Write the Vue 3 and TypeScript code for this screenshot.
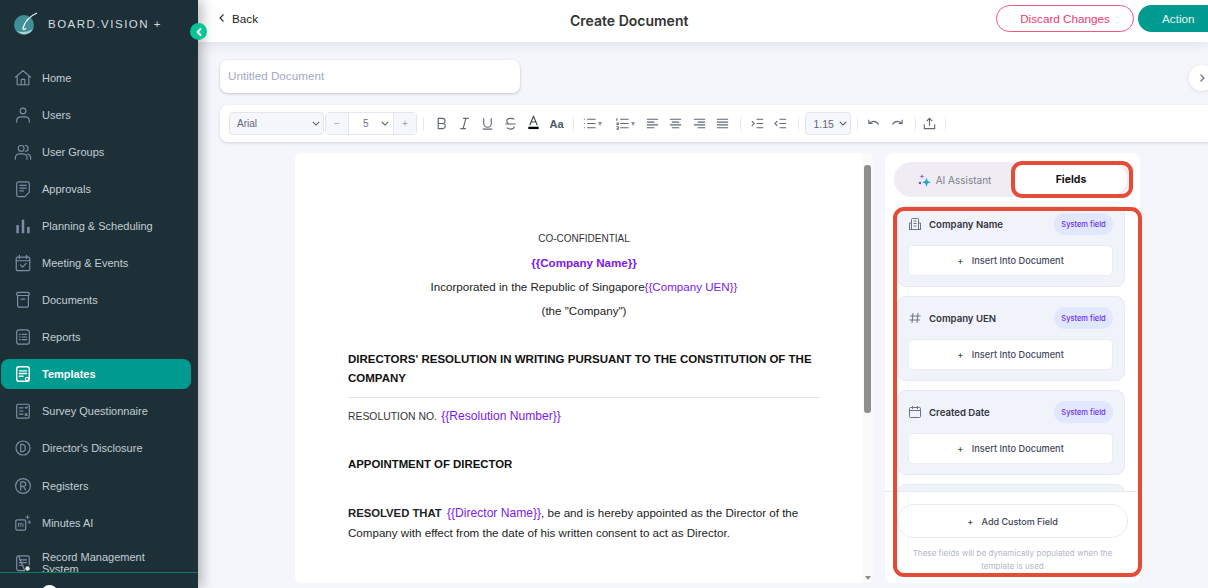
<script setup lang="ts">
const navItems = [
  { label: 'Home', icon: 'home' },
  { label: 'Users', icon: 'user' },
  { label: 'User Groups', icon: 'users' },
  { label: 'Approvals', icon: 'approvals' },
  { label: 'Planning & Scheduling', icon: 'bars' },
  { label: 'Meeting & Events', icon: 'meeting' },
  { label: 'Documents', icon: 'archive' },
  { label: 'Reports', icon: 'reports' },
  { label: 'Templates', icon: 'templates', active: true },
  { label: 'Survey Questionnaire', icon: 'survey' },
  { label: "Director's Disclosure", icon: 'd' },
  { label: 'Registers', icon: 'r' },
  { label: 'Minutes AI', icon: 'minutes' },
  { label: 'Record Management System', icon: 'record', tall: true },
]

const fields = [
  { name: 'Company Name', icon: 'building' },
  { name: 'Company UEN', icon: 'hash' },
  { name: 'Created Date', icon: 'calendar' },
]
</script>

<template>
  <div class="page">
    <aside class="sidebar">
      <div class="brand">
        <svg class="logo" viewBox="0 0 26 26" width="26" height="26">
          <circle cx="11" cy="14" r="10" fill="#3f8f96" />
          <path d="M4 20a10 10 0 0 0 16-2c-5 3-11 4-16 2z" fill="#a8d5d6" />
          <path d="M24 2C17 5 12 10 10 17c-.5 2 2 2 3 0" fill="none" stroke="#e8f2f2" stroke-width="1.3" />
        </svg>
        <span class="brand-name">BOARD.VISION +</span>
      </div>
      <nav class="nav">
        <a v-for="item in navItems" :key="item.label" class="nav-item" :class="{ active: item.active, tall: item.tall }">
          <svg class="nav-icon" viewBox="0 0 20 20" fill="none" stroke="currentColor" stroke-width="1.3" stroke-linecap="round" stroke-linejoin="round">
            <template v-if="item.icon === 'home'">
              <path d="M1.500 9 10 2l8.500 7M3.500 8v9.500h13V8" />
              <path d="M8 17.500V11.500h4v6" />
            </template>
            <template v-else-if="item.icon === 'user'">
              <circle cx="10" cy="5.500" r="3.200" />
              <path d="M3 18v-1.500C3 13.500 5.500 12 8 12h4c2.500 0 5 1.500 5 4.500V18" />
            </template>
            <template v-else-if="item.icon === 'users'">
              <circle cx="8" cy="6" r="3.200" />
              <path d="M1.500 18v-1.500c0-3 2.500-4.500 4.500-4.500h4c2 0 4.500 1.500 4.500 4.500V18M12.500 2.800a3.200 3.200 0 0 1 0 6.400M15 12.200c2 .5 3.500 2 3.500 4.300V18" />
            </template>
            <template v-else-if="item.icon === 'approvals'">
              <path d="M5 2h10a2 2 0 0 1 2 2v9.500L12 18.500H5a2 2 0 0 1-2-2V4a2 2 0 0 1 2-2z" />
              <path d="M6.500 6h7M6.500 9h7M6.500 12h4" />
            </template>
            <template v-else-if="item.icon === 'bars'">
              <path d="M4 9v9M10 3v15M16 11v7" stroke-width="2.800" stroke-linecap="butt" />
            </template>
            <template v-else-if="item.icon === 'meeting'">
              <rect x="2.500" y="3.500" width="15" height="15" rx="1.500" />
              <path d="M2.500 7.500h15M6 1.500v3.500M14 1.500v3.500M7 12l2.500 2.500 4-4" />
            </template>
            <template v-else-if="item.icon === 'archive'">
              <rect x="3" y="1.500" width="14" height="3.500" rx="1.500" />
              <path d="M4 5v11.500a1.500 1.500 0 0 0 1.500 1.500h9a1.500 1.500 0 0 0 1.500-1.500V5M8 9h4" />
            </template>
            <template v-else-if="item.icon === 'reports'">
              <rect x="3" y="2" width="14" height="16" rx="2.500" />
              <path d="M6 7h1M9 7h5M6 10h1M9 10h5M6 13h1M9 13h5" />
            </template>
            <template v-else-if="item.icon === 'templates'">
              <rect x="3" y="2" width="14" height="16" rx="2.500" stroke-width="1.600" />
              <path d="M6 6.500h8M6 9.500h8M6 12.500h4" stroke-width="1.600" />
              <circle cx="14.500" cy="15.500" r="1.800" fill="#009b90" stroke-width="1.300" />
            </template>
            <template v-else-if="item.icon === 'survey'">
              <rect x="3" y="2.500" width="14" height="15.500" rx="1.500" />
              <path d="M6 6.500h4M6 10h4M6 13.500h4M12.500 6l1 1 1.500-1.500M12.500 13l2 2M14.500 13l-2 2" />
            </template>
            <template v-else-if="item.icon === 'd'">
              <circle cx="10" cy="10" r="7.800" />
              <path d="M7.500 6v8h2a3.500 3.500 0 0 0 3-4 3.500 3.500 0 0 0-3-4z" />
            </template>
            <template v-else-if="item.icon === 'r'">
              <circle cx="10" cy="10" r="8.200" />
              <path d="M7.500 14.500v-9h3a2.500 2.500 0 0 1 0 5h-3M10.500 10.500l2.500 4" />
            </template>
            <template v-else-if="item.icon === 'minutes'">
              <rect x="2" y="6.500" width="11" height="11.500" rx="1.500" />
              <path d="M5 14v-3.500M5 11.500c0-1.500 2.500-1.500 2.500 0V14M7.500 11.500c0-1.500 2.500-1.500 2.500 0V14" stroke-width="1" />
              <path d="M15 1.500v4M13 3.500h4M17 7.500v3M15.500 9h3" stroke-width="1" />
            </template>
            <template v-else>
              <path d="M5 2h10a2 2 0 0 1 2 2v8M12 18.500H5a2 2 0 0 1-2-2V4a2 2 0 0 1 2-2z" />
              <path d="M6 6.500h8M6 9.500h8M6 12.500h4" />
              <circle cx="15" cy="16" r="2.500" fill="#dfe6ee" stroke="none" />
            </template>
          </svg>
          <span class="nav-label">{{ item.label }}</span>
        </a>
      </nav>
      <div class="sidebar-foot"><span class="avatar"></span></div>
      <button class="collapse">
        <svg viewBox="0 0 10 10" width="10" height="10" fill="none" stroke="#fff" stroke-width="2" stroke-linecap="round" stroke-linejoin="round"><path d="M6.500 2 3.500 5l3 3" /></svg>
      </button>
    </aside>

    <main class="main">
      <header class="topbar">
        <a class="back">
          <svg viewBox="0 0 8 10" width="8" height="10" fill="none" stroke="#333" stroke-width="1.200"><path d="M5.500 1.500 2 5l3.500 3.500" /></svg>
          Back
        </a>
        <h1 class="title">Create Document</h1>
        <div class="actions">
          <button class="discard">Discard Changes</button>
          <button class="action">Action</button>
        </div>
      </header>

      <div class="content">
        <div class="title-row">
          <div class="doc-title">Untitled Document</div>
          <button class="expand">
            <svg viewBox="0 0 8 10" width="8" height="10" fill="none" stroke="#6b7280" stroke-width="1.200"><path d="M2.500 1.500 6 5 2.500 8.500" /></svg>
          </button>
        </div>

        <div class="toolbar">
          <div class="select font-select">Arial
            <svg class="chev" viewBox="0 0 10 6" fill="none" stroke="#4b5563" stroke-width="1.300"><path d="M1 1l4 4 4-4" /></svg>
          </div>
          <div class="size-group">
            <span class="size-btn">−</span>
            <span class="size-val">5
              <svg class="chev" viewBox="0 0 10 6" fill="none" stroke="#4b5563" stroke-width="1.300"><path d="M1 1l4 4 4-4" /></svg>
            </span>
            <span class="size-btn">+</span>
          </div>
          <i class="sep first"></i>
          <div class="tools">
            <svg viewBox="0 0 16 16" class="tool"><path d="M4.500 2.500h4.500a2.700 2.700 0 0 1 0 5.500H4.500zM4.500 8h5.300a2.800 2.800 0 0 1 0 5.500H4.500z" /></svg>
            <svg viewBox="0 0 16 16" class="tool"><path d="M6.500 2.500h6M3.500 13.500h6M9.500 2.500l-3 11" /></svg>
            <svg viewBox="0 0 16 16" class="tool"><path d="M4 2.500V8a4 4 0 0 0 8 0V2.500M3 14h10" /></svg>
            <svg viewBox="0 0 16 16" class="tool"><path d="M12 3.500C11 2.500 9.500 2.500 8 2.500 5.500 2.500 4 3.500 4 5.500c0 1 .5 2 2 2.500M2.500 8.500h11M12 11c0 2-1.500 3-4 3-1.500 0-3-.5-4-1.500" /></svg>
            <svg viewBox="0 0 16 16" class="tool color"><path d="M4 11 8 1.500 12 11M5.500 7.500h5" stroke="#374151" /><rect x="2.500" y="12.500" width="11" height="2.500" fill="#000" stroke="none" /></svg>
            <span class="aa">Aa</span>
          </div>
          <i class="sep"></i>
          <div class="tools lists">
            <span class="with-caret">
              <svg viewBox="0 0 16 16" class="tool"><path d="M5.500 3.500h9M5.500 8h9M5.500 12.500h9M2 3.500h1M2 8h1M2 12.500h1" /></svg><b class="caret"></b>
            </span>
            <span class="with-caret">
              <svg viewBox="0 0 16 16" class="tool"><path d="M5.500 3.500h9M5.500 8h9M5.500 12.500h9M2 2.500v2.500M1.500 7.500h2v1.500h-2M1.500 11.500h2v2.500h-2" /></svg><b class="caret"></b>
            </span>
            <svg viewBox="0 0 16 16" class="tool"><path d="M2 3.500h12M2 6.500h8M2 9.500h12M2 12.500h8" /></svg>
            <svg viewBox="0 0 16 16" class="tool"><path d="M2 3.500h12M4 6.500h8M2 9.500h12M4 12.500h8" /></svg>
            <svg viewBox="0 0 16 16" class="tool"><path d="M2 3.500h12M6 6.500h8M2 9.500h12M6 12.500h8" /></svg>
            <svg viewBox="0 0 16 16" class="tool"><path d="M2 3.500h12M2 6.500h12M2 9.500h12M2 12.500h12" /></svg>
          </div>
          <i class="sep"></i>
          <div class="tools indent">
            <svg viewBox="0 0 16 16" class="tool"><path d="M7 3.500h7M7 8h7M7 12.500h7M2 5.500 4.500 8 2 10.500" /></svg>
            <svg viewBox="0 0 16 16" class="tool"><path d="M7 3.500h7M7 8h7M7 12.500h7M4.500 5.500 2 8l2.500 2.500" /></svg>
          </div>
          <i class="sep"></i>
          <div class="select line-select">1.15
            <svg class="chev" viewBox="0 0 10 6" fill="none" stroke="#4b5563" stroke-width="1.300"><path d="M1 1l4 4 4-4" /></svg>
          </div>
          <i class="sep"></i>
          <div class="tools history">
            <svg viewBox="0 0 16 16" class="tool"><path d="M3 4v4h4M3.500 8C5 5.500 10 4 13.500 9" /></svg>
            <svg viewBox="0 0 16 16" class="tool"><path d="M13 4v4H9M12.500 8C11 5.500 6 4 2.500 9" /></svg>
          </div>
          <i class="sep"></i>
          <svg viewBox="0 0 16 16" class="tool share"><path d="M2.500 9v4.500h11V9M8 10.500V2.500M5 5.500l3-3 3 3" /></svg>
          <i class="sep"></i>
        </div>

        <div class="workspace">
          <div class="doc">
            <article class="doc-body">
              <p class="center small">CO-CONFIDENTIAL</p>
              <p class="center var bold" v-pre>{{Company Name}}</p>
              <p class="center">Incorporated in the Republic of Singapore<span class="var" v-pre>{{Company UEN}}</span></p>
              <p class="center">(the "Company")</p>
              <h2>DIRECTORS' RESOLUTION IN WRITING PURSUANT TO THE CONSTITUTION OF THE COMPANY</h2>
              <hr />
              <p><span class="res-no">RESOLUTION NO.</span> <span class="var big" v-pre>{{Resolution Number}}</span></p>
              <h3>APPOINTMENT OF DIRECTOR</h3>
              <p class="resolved"><b>RESOLVED THAT</b> <span class="var big" v-pre>{{Director Name}}</span>, be and is hereby appointed as the Director of the Company with effect from the date of his written consent to act as Director.</p>
            </article>
            <div class="scrollbar"><span class="thumb"></span><b class="scroll-down"></b></div>
          </div>

          <section class="panel">
            <div class="tabs">
              <div class="tab">
                <svg viewBox="0 0 14 14" width="14" height="14">
                  <path d="M8.500 4.500 9.700 8 13 9.200 9.700 10.400 8.500 14 7.300 10.400 4 9.200 7.300 8z" fill="#2aa5c9" />
                  <path d="M4 1l.6 1.800L6.400 3.400 4.600 4 4 5.800 3.400 4 1.600 3.400 3.400 2.800z" fill="#8b5cf6" />
                  <circle cx="2" cy="10" r="1.200" fill="#5b4fe0" />
                </svg>
                AI Assistant
              </div>
              <div class="tab selected">Fields</div>
            </div>
            <div class="field-list">
              <div v-for="f in fields" :key="f.name" class="field-card">
                <div class="field-head">
                  <svg class="field-icon" viewBox="0 0 14 14" fill="none" stroke="#6b7280" stroke-width="1">
                    <template v-if="f.icon === 'building'">
                      <path d="M3.500 12.500v-10a1 1 0 0 1 1-1h5a1 1 0 0 1 1 1v10M1.500 12.500V6h2M12.500 12.500V6h-2M1 12.500h12M5.500 4h3M5.500 6.500h3M5.500 9h3" />
                    </template>
                    <template v-else-if="f.icon === 'hash'">
                      <path d="M5 2 4 12M10 2 9 12M2 5h10.500M1.500 9H12" />
                    </template>
                    <template v-else>
                      <rect x="1.500" y="2.500" width="11" height="10" rx="1" />
                      <path d="M1.500 5.500h11M4.500 1v3M9.500 1v3" />
                    </template>
                  </svg>
                  <span class="field-name">{{ f.name }}</span>
                  <span class="badge">System field</span>
                </div>
                <button class="insert"><span class="plus">+</span> Insert Into Document</button>
              </div>
              <div class="field-card partial"></div>
            </div>
            <div class="panel-foot">
              <button class="add-field"><span class="plus">+</span> Add Custom Field</button>
              <p class="hint">These fields will be dynamically populated when the template is used</p>
            </div>
            <span class="mark mark-tab"></span>
            <span class="mark mark-list"></span>
          </section>
        </div>
      </div>
    </main>
  </div>
</template>

<style>
html, body { margin: 0; overflow: hidden; }
</style>

<style scoped>
* { box-sizing: border-box; }
.page {
  width: 1208px;
  height: 588px;
  display: flex;
  overflow: hidden;
  font-family: "Liberation Sans", Arial, sans-serif;
  background: #f5f6fb;
}
.sidebar {
  position: relative;
  z-index: 3;
  width: 198px;
  flex: none;
  background: #1d3038;
  display: flex;
  flex-direction: column;
  box-shadow: 4px 0 12px rgba(0, 0, 0, 0.28);
}
.brand {
  height: 42px;
  padding: 6px 0 0 13px;
  display: flex;
  align-items: center;
  flex: none;
}
.logo { flex: none; margin-top: -1px; }
.brand-name {
  margin-left: 9px;
  font-size: 11.5px;
  letter-spacing: 1.5px;
  color: #d5dde0;
  white-space: nowrap;
}
.nav {
  flex: 1;
  min-height: 0;
  overflow: hidden;
  padding: 20.5px 7px 0 1px;
  display: flex;
  flex-direction: column;
  gap: 7.1px;
}
.nav-item {
  height: 30px;
  flex: none;
  display: flex;
  align-items: center;
  gap: 10px;
  padding-left: 13px;
  font-size: 11px;
  color: #c3ced4;
  border-radius: 8px;
}
.nav-item.tall { height: 36px; line-height: 12px; }
.nav-label { max-width: 125px; }
.nav-item.active {
  background: #009b90;
  color: #fff;
  font-weight: 700;
}
.nav-icon { width: 18px; height: 18px; flex: none; color: #7f8da6; }
.active .nav-icon { color: #fff; }
.sidebar-foot {
  height: 16px;
  flex: none;
  border-top: 1px solid #0f7a66;
  background: #1d3038;
  position: relative;
  overflow: hidden;
}
.avatar {
  position: absolute;
  left: 41px;
  top: 12px;
  width: 17px;
  height: 17px;
  border-radius: 50%;
  background: #fff;
}
.collapse {
  position: absolute;
  right: -9px;
  top: 23px;
  width: 17px;
  height: 17px;
  border-radius: 50%;
  border: 0;
  padding: 0;
  background: #06c495;
  display: flex;
  align-items: center;
  justify-content: center;
}
.main { flex: 1; min-width: 0; display: flex; flex-direction: column; }
.topbar {
  height: 42px;
  flex: none;
  background: #fff;
  position: relative;
  z-index: 2;
  display: flex;
  align-items: center;
  padding-left: 20px;
  box-shadow: 0 2px 12px rgba(0, 0, 0, 0.09);
}
.back { display: flex; align-items: center; gap: 6px; font-size: 11.7px; color: #222; margin-top: -6px; }
.title {
  position: absolute;
  left: 372px;
  top: 13px;
  margin: 0;
  font-size: 14px;
  line-height: 16px;
  font-weight: 600;
  font-family: Inter, sans-serif;
  color: #333;
}
.actions { margin-left: auto; display: flex; gap: 4px; margin-right: -40px; margin-top: -5px; }
.actions button {
  height: 27px;
  border-radius: 14px;
  font: 11.7px "Liberation Sans", Arial, sans-serif;
}
.discard { width: 138px; background: #fff; border: 1px solid #f4577f; color: #f0386b; }
.action { width: 110px; background: #009b90; border: 0; color: #e6f5f4; text-align: left; padding-left: 24px; }
.content { flex: 1; min-height: 0; padding: 18px 0 0 22px; display: flex; flex-direction: column; }
.title-row { display: flex; align-items: center; justify-content: space-between; height: 33px; flex: none; }
.doc-title {
  width: 300px;
  height: 33px;
  background: #fff;
  border-radius: 8px;
  padding-left: 8px;
  line-height: 32px;
  font-size: 11.7px;
  color: #a4a8c4;
  box-shadow: 0 1px 3px rgba(0, 0, 0, 0.2);
}
.expand {
  width: 26px;
  height: 26px;
  margin-right: -7px;
  margin-top: 2px;
  border-radius: 50%;
  border: 0;
  background: #fff;
  padding: 0;
  display: flex;
  align-items: center;
  justify-content: center;
  box-shadow: 0 1px 4px rgba(0, 0, 0, 0.1);
}
.toolbar {
  margin-top: 12px;
  height: 37px;
  flex: none;
  margin-right: -10px;
  background: #fff;
  border-radius: 8px 0 0 8px;
  box-shadow: 0 1px 3px rgba(0, 0, 0, 0.14);
  display: flex;
  align-items: center;
  padding-left: 9px;
}
.select {
  height: 23px;
  background: #f6f7fc;
  border: 1px solid #e3e6f0;
  border-radius: 4px;
  display: flex;
  align-items: center;
  justify-content: space-between;
  font-size: 10px;
  color: #5f6676;
  padding: 0 3px 0 7px;
}
.font-select { width: 95px; }
.line-select { width: 46px; font-size: 10.5px; padding-left: 8px; margin: 0 -2px; }
.chev { width: 8px; height: 5px; flex: none; }
.size-group {
  margin-left: 1px;
  width: 92px;
  height: 23px;
  border: 1px solid #e3e6f0;
  border-radius: 4px;
  display: flex;
  font-size: 10px;
  color: #6b7280;
}
.size-btn {
  width: 22px;
  display: flex;
  align-items: center;
  justify-content: center;
  background: #f6f7fc;
  color: #9aa1b0;
}
.size-val {
  flex: 1;
  display: flex;
  align-items: center;
  justify-content: space-between;
  padding: 0 4px 0 14px;
  border-left: 1px solid #e3e6f0;
  border-right: 1px solid #e3e6f0;
}
.sep { width: 1px; height: 14px; background: #e8eaf1; margin: 0 8px; flex: none; }
.sep.first { margin: 0 9.5px 0 6px; }
.tools { display: flex; align-items: center; gap: 8px; }
.tool {
  width: 15px;
  height: 15px;
  fill: none;
  stroke: #5f6676;
  stroke-width: 1.2;
  flex: none;
}
.tool.color { margin-top: -2px; }
.aa { font-size: 11px; font-weight: 700; color: #4b5563; width: 15px; margin-left: 1px; }
.lists { gap: 8.5px; margin-right: 1.5px; }
.indent { margin: 0 1.5px; }
.history { gap: 9px; margin-right: 2px; }
.share { margin-left: -1.5px; }
.with-caret { display: flex; align-items: center; gap: 1px; margin-right: 1px; }
.with-caret:first-child { margin-right: 5px; }
.caret {
  width: 0;
  height: 0;
  border-left: 2.5px solid transparent;
  border-right: 2.5px solid transparent;
  border-top: 4px solid #8a90a0;
}
.workspace { flex: 1; min-height: 0; display: flex; padding: 11px 0 5px 75px; gap: 12px; }
.doc {
  width: 578px;
  flex: none;
  background: #fff;
  border-radius: 6px;
  position: relative;
  overflow: hidden;
}
.doc-body {
  padding: 76px 53px 0;
  font-size: 11.6px;
  line-height: 19px;
  color: #222;
}
.doc-body p { margin: 0; }
.doc-body .center { text-align: center; margin-bottom: 5px; }
.doc-body .small { font-size: 10px; color: #333; }
.res-no { font-size: 10.4px; color: #333; margin-right: 1px; }
.var { color: #7c18f0; }
.var.bold { font-weight: 700; font-size: 11.6px; }
.var.big { font-size: 12.1px; }
.doc-body h2 { margin: 30px 0 0; font-size: 11.5px; line-height: 19px; color: #111; }
.doc-body hr { margin: 9px 0 8px; border: 0; border-top: 1px solid #e4e4e4; }
.doc-body h3 { margin: 29px 0 0; font-size: 11.4px; line-height: 19px; color: #111; }
.doc-body .resolved { margin-top: 29px; line-height: 20px; }
.resolved b { font-size: 11.3px; margin-right: 2px; }
.scrollbar {
  position: absolute;
  right: 0;
  top: 0;
  bottom: 0;
  width: 10px;
  background: #fafafa;
  padding: 12px 0 0 1px;
}
.thumb { display: block; height: 248px; width: 7px; border-radius: 3px; background: #8e8e8e; }
.scroll-down {
  position: absolute;
  left: 2px;
  bottom: 3px;
  width: 0;
  height: 0;
  border-left: 3px solid transparent;
  border-right: 3px solid transparent;
  border-top: 4px solid #8e8e8e;
}
.panel {
  width: 255px;
  flex: none;
  background: #fff;
  border-radius: 8px;
  position: relative;
  display: flex;
  flex-direction: column;
  padding: 9px 0 0;
}
.tabs {
  margin: 0 9px;
  height: 35px;
  flex: none;
  background: #efedf3;
  border-radius: 18px;
  display: flex;
  align-items: center;
}
.tab {
  flex: 1;
  display: flex;
  align-items: center;
  justify-content: center;
  gap: 4px;
  padding-left: 4px;
  font-size: 10px;
  color: #80808c;
  font-family: Inter, sans-serif;
}
.tab.selected {
  height: 31px;
  flex: none;
  width: 116px;
  margin-right: 4px;
  border-radius: 16px;
  background: #fff;
  color: #111;
  font-size: 10.5px;
  font-weight: 700;
}
.field-list {
  flex: 1;
  min-height: 0;
  overflow: hidden;
  margin-top: 9px;
  padding: 0 15px 0 12px;
  display: flex;
  flex-direction: column;
  gap: 9px;
  margin-bottom: -1px;
}
.field-card {
  flex: none;
  height: 85px;
  background: #f0f3fa;
  border: 1px solid #e7eaf4;
  border-radius: 9px;
  padding: 10px 11px 0 10px;
}
.field-card:first-child { height: 81px; padding-top: 6px; }
.field-card.partial { height: 30px; }
.field-head { display: flex; align-items: center; height: 22px; margin-bottom: 10px; }
.field-icon { width: 14px; height: 14px; flex: none; margin-right: 7px; }
.field-name { font-size: 9.6px; font-weight: 600; color: #30343f; font-family: Inter, sans-serif; }
.badge {
  margin-left: auto;
  height: 22px;
  width: 59px;
  border-radius: 11px;
  background: #e0e7ff;
  color: #6d2fef;
  font-size: 7.5px;
  font-family: Inter, sans-serif;
  font-weight: 500;
  display: flex;
  align-items: center;
  justify-content: center;
  white-space: nowrap;
}
.insert {
  width: 100%;
  height: 31px;
  background: #fff;
  border: 1px solid #ebedf5;
  border-radius: 5px;
  font: 500 9.2px Inter, sans-serif;
  color: #444a5c;
}
.plus { margin-right: 6px; }
.panel-foot {
  position: relative;
  z-index: 1;
  flex: none;
  height: 92px;
  background: #fff;
  border-top: 1px solid #e7eaf2;
  border-radius: 0 0 8px 8px;
  padding: 12px 12px 0 12px;
}
.add-field {
  width: 231px;
  height: 34px;
  background: #fff;
  border: 1px solid #e9ebf3;
  border-radius: 17px;
  font: 500 9px Inter, sans-serif;
  color: #3a4155;
  display: block;
}
.hint {
  margin: 9px 0 0;
  text-align: center;
  font: 8.1px/13px Inter, sans-serif;
  color: #b3b7c8;
}
.mark { position: absolute; border: 4px solid #e54c38; pointer-events: none; z-index: 4; }
.mark-tab { left: 126px; top: 8px; width: 122px; height: 37px; border-radius: 11px; }
.mark-list { left: 8px; top: 54px; width: 249px; height: 370px; border-radius: 11px; }
</style>
